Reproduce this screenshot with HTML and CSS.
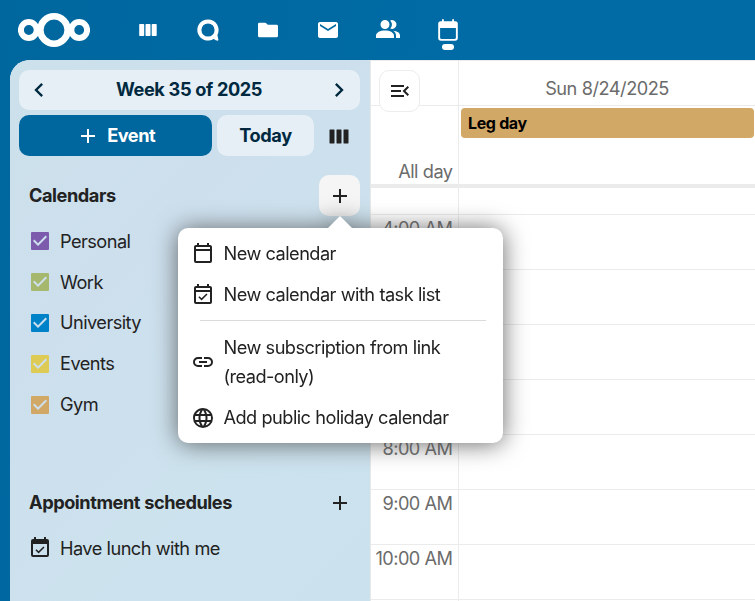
FILE: index.html
```html
<!DOCTYPE html>
<html lang="en">
<head>
<meta charset="utf-8">
<title>Calendar</title>
<link rel="stylesheet" href="styles.css">
</head>
<body>
<svg class="defs" aria-hidden="true">
  <symbol id="plus" viewBox="0 0 24 24"><path d="M19,13H13V19H11V13H5V11H11V5H13V11H19V13Z"/></symbol>
  <symbol id="columns" viewBox="0 0 24 24"><rect x="2.5" y="5.5" width="5" height="14" rx=".4"/><rect x="9.5" y="5.5" width="5" height="14" rx=".4"/><rect x="16.5" y="5.5" width="5" height="14" rx=".4"/></symbol>
  <symbol id="cal-check" viewBox="0 0 24 24"><path d="M19,3H18V1H16V3H8V1H6V3H5C3.9,3 3,3.9 3,5V19A2,2 0 0,0 5,21H19A2,2 0 0,0 21,19V5C21,3.9 20.1,3 19,3M19,19H5V9H19V19M19,7H5V5H19V7M10.56,17.46L16.5,11.53L15.43,10.47L10.56,15.34L8.45,13.23L7.39,14.29L10.56,17.46Z"/></symbol>
  <symbol id="checked" viewBox="0 0 24 24"><path d="M4 3H20A1 1 0 0 1 21 4V20A1 1 0 0 1 20 21H4A1 1 0 0 1 3 20V4A1 1 0 0 1 4 3M10 17L19 8L17.59 6.58L10 14.17L6.41 10.59L5 12L10 17Z"/></symbol>
</svg>

<header class="topbar">
  <svg class="logo" viewBox="0 0 72 36"><circle cx="10.8" cy="18" r="7.9"/><circle class="big" cx="36" cy="18" r="13.7"/><circle cx="61.2" cy="18" r="7.9"/></svg>
  <nav class="apps">
    <span class="app"><svg class="icon" viewBox="0 0 24 24"><rect x="3.2" y="6" width="5" height="12" rx=".7"/><rect x="9.5" y="6" width="5" height="12" rx=".7"/><rect x="15.7" y="6" width="5" height="12" rx=".7"/></svg></span>
    <span class="app"><svg class="icon" viewBox="0 0 24 24"><path fill-rule="evenodd" d="M12 1.4A10.6 10.6 0 1 0 17.7 20.9C19 21.8 21.3 23 22.1 22.6C22.9 22.1 21.8 19.2 21.4 16.9A10.6 10.6 0 0 0 12 1.4M12 5.4A6.6 6.6 0 1 1 12 18.6A6.6 6.6 0 1 1 12 5.4Z"/></svg></span>
    <span class="app"><svg class="icon" viewBox="0 0 24 24"><path d="M3.4 4.7H9Q9.7 4.7 10.2 5.2L11.8 6.8H20.5Q22 6.8 22 8.2V17.8Q22 19.3 20.5 19.3H3.5Q2 19.3 2 17.8V6.1Q2 4.7 3.4 4.7Z"/></svg></span>
    <span class="app"><svg class="icon" viewBox="0 0 24 24"><path d="M20,8L12,13L4,8V6L12,11L20,6M20,4H4C2.89,4 2,4.89 2,6V18A2,2 0 0,0 4,20H20A2,2 0 0,0 22,18V6C22,4.89 21.1,4 20,4Z"/></svg></span>
    <span class="app"><svg class="icon" viewBox="0 0 24 24"><path d="M16.5 11A4.5 4.5 0 0 1 14.2 10.6A6.5 6.5 0 0 0 14.2 2.4A4.5 4.5 0 1 1 16.5 11M9 2A4.5 4.5 0 1 1 9 11A4.5 4.5 0 1 1 9 2M0 20V17.8C0 14.4 4.2 12.5 9 12.5S18 14.4 18 17.8V20ZM20 20V17.6C20 15.6 19 14 17.3 12.8C21 13.2 24 14.7 24 17.6V20Z"/></svg></span>
    <span class="app active"><svg class="icon" viewBox="0 0 24 24"><path fill-rule="evenodd" d="M6 1.2H7.8V3.2H16.2V1.2H18V3.2H19.3Q21.8 3.2 21.8 5.7V20Q21.8 22.7 19.1 22.7H4.9Q2.2 22.7 2.2 20V5.7Q2.2 3.2 4.7 3.2H6ZM4.1 10V19.8Q4.1 20.9 5.2 20.9H18.8Q19.9 20.9 19.9 19.8V10Z"/></svg></span>
  </nav>
</header>

<div class="content">
  <aside class="sidebar">
    <div class="period">
      <svg class="icon" viewBox="0 0 24 24"><path d="M15.41,16.58L10.83,12L15.41,7.41L14,6L8,12L14,18L15.41,16.58Z"/></svg>
      <strong>Week 35 of 2025</strong>
      <svg class="icon" viewBox="0 0 24 24"><path d="M8.59,16.58L13.17,12L8.59,7.41L10,6L16,12L10,18L8.59,16.58Z"/></svg>
    </div>
    <div class="actions">
      <button class="btn primary"><svg class="icon"><use href="#plus"/></svg><span>Event</span></button>
      <button class="btn secondary">Today</button>
      <button class="btn square"><svg class="icon"><use href="#columns"/></svg></button>
    </div>
    <div class="heading"><h2>Calendars</h2><div class="add open"><svg class="icon"><use href="#plus"/></svg>
      <div class="menu">
        <div class="item"><svg class="icon" viewBox="0 0 24 24"><path d="M19,3H18V1H16V3H8V1H6V3H5C3.9,3 3,3.9 3,5V19A2,2 0 0,0 5,21H19A2,2 0 0,0 21,19V5C21,3.9 20.1,3 19,3M19,19H5V9H19V19M19,7H5V5H19V7Z"/></svg><span>New calendar</span></div>
        <div class="item"><svg class="icon"><use href="#cal-check"/></svg><span>New calendar with task list</span></div>
        <div class="separator"></div>
        <div class="item tall"><svg class="icon" viewBox="0 0 24 24"><path d="M3.9,12C3.9,10.29 5.29,8.9 7,8.9H11V7H7A5,5 0 0,0 2,12A5,5 0 0,0 7,17H11V15.1H7C5.29,15.1 3.9,13.71 3.9,12M8,13H16V11H8V13M17,7H13V8.9H17C18.71,8.9 20.1,10.29 20.1,12C20.1,13.71 18.71,15.1 17,15.1H13V17H17A5,5 0 0,0 22,12A5,5 0 0,0 17,7Z"/></svg><span>New subscription from link<br>(read-only)</span></div>
        <div class="item"><svg class="icon" viewBox="0 0 24 24"><path d="M16.36,14C16.44,13.34 16.5,12.68 16.5,12C16.5,11.32 16.44,10.66 16.36,10H19.74C19.9,10.64 20,11.31 20,12C20,12.69 19.9,13.36 19.74,14M14.59,19.56C15.19,18.45 15.65,17.25 15.97,16H18.92C17.96,17.65 16.43,18.93 14.59,19.56M14.34,14H9.66C9.56,13.34 9.5,12.68 9.5,12C9.5,11.32 9.56,10.65 9.66,10H14.34C14.43,10.65 14.5,11.32 14.5,12C14.5,12.68 14.43,13.34 14.34,14M12,19.96C11.17,18.76 10.5,17.43 10.09,16H13.91C13.5,17.43 12.83,18.76 12,19.96M8,8H5.08C6.03,6.34 7.57,5.06 9.4,4.44C8.8,5.55 8.35,6.75 8,8M5.08,16H8C8.35,17.25 8.8,18.45 9.4,19.56C7.57,18.93 6.03,17.65 5.08,16M4.26,14C4.1,13.36 4,12.69 4,12C4,11.31 4.1,10.64 4.26,10H7.64C7.56,10.66 7.5,11.32 7.5,12C7.5,12.68 7.56,13.34 7.64,14M12,4.03C12.83,5.23 13.5,6.57 13.91,8H10.09C10.5,6.57 11.17,5.23 12,4.03M18.92,8H15.97C15.65,6.75 15.19,5.55 14.59,4.44C16.43,5.07 17.96,6.34 18.92,8M12,2C6.47,2 2,6.5 2,12A10,10 0 0,0 12,22A10,10 0 0,0 22,12A10,10 0 0,0 12,2Z"/></svg><span>Add public holiday calendar</span></div>
      </div>
    </div></div>
    <ul class="list calendars">
      <li class="purple"><svg class="icon"><use href="#checked"/></svg><span>Personal</span></li>
      <li class="green"><svg class="icon"><use href="#checked"/></svg><span>Work</span></li>
      <li class="blue"><svg class="icon"><use href="#checked"/></svg><span>University</span></li>
      <li class="yellow"><svg class="icon"><use href="#checked"/></svg><span>Events</span></li>
      <li class="orange"><svg class="icon"><use href="#checked"/></svg><span>Gym</span></li>
    </ul>
    <div class="heading"><h2>Appointment schedules</h2><div class="add"><svg class="icon"><use href="#plus"/></svg></div></div>
    <ul class="list">
      <li><svg class="icon" viewBox="0 0 24 24"><path d="M19,3H18V1H16V3H8V1H6V3H5A2,2 0 0,0 3,5V19A2,2 0 0,0 5,21H19A2,2 0 0,0 21,19V5A2,2 0 0,0 19,3M19,19H5V8H19V19M10.56,17.46L16.5,11.53L15.43,10.47L10.56,15.34L8.45,13.23L7.39,14.29L10.56,17.46Z"/></svg><span>Have lunch with me</span></li>
    </ul>
  </aside>

  <main class="grid">
    <button class="toggle"><svg class="icon" viewBox="0 0 24 24"><path d="M21,15.61L19.59,17L14.58,12L19.59,7L21,8.39L17.44,12L21,15.61M3,6H16V8H3V6M3,13V11H13V13H3M3,18V16H16V18H3Z"/></svg></button>
    <div class="row head"><div class="axis"></div><div class="cell">Sun 8/24/2025</div></div>
    <div class="row allday"><div class="axis">All day</div><div class="cell"><div class="event">Leg day</div></div></div>
    <div class="row rest"><div class="axis"></div><div class="cell"></div></div>
    <div class="row hour"><div class="axis">4:00 AM</div><div class="cell"></div></div>
    <div class="row hour"><div class="axis"></div><div class="cell"></div></div>
    <div class="row hour"><div class="axis"></div><div class="cell"></div></div>
    <div class="row hour"><div class="axis"></div><div class="cell"></div></div>
    <div class="row hour"><div class="axis">8:00 AM</div><div class="cell"></div></div>
    <div class="row hour"><div class="axis">9:00 AM</div><div class="cell"></div></div>
    <div class="row hour"><div class="axis">10:00 AM</div><div class="cell"></div></div>
    <div class="row hour"><div class="axis"></div><div class="cell"></div></div>
  </main>
</div>
</body>
</html>
```
FILE: styles.css
```css
* { box-sizing: border-box; }
html, body { height: 100%; }
body {
  margin: 0;
  display: flex;
  flex-direction: column;
  overflow: hidden;
  background: linear-gradient(100deg, #00679e, #006ba5 60%);
  color: #222;
  font: 380 18.2px/29px Inter, "Liberation Sans", sans-serif;
  letter-spacing: -.55px;
  word-spacing: .3px;
}
.defs { display: none; }
.icon { display: block; flex: none; width: 24px; height: 24px; fill: currentColor; }

.topbar { flex: none; display: flex; align-items: center; height: 60px; padding-left: 18px; color: #fff; }
.logo { width: 72px; height: 36px; fill: none; stroke: #fff; stroke-width: 6; }
.logo .big { stroke-width: 6.6; }
.apps { display: flex; margin-left: 28px; }
.app { position: relative; display: flex; align-items: center; justify-content: center; width: 60px; height: 60px; }
.active::after { content: ""; position: absolute; bottom: 10px; left: 24px; width: 12px; height: 6px; border-radius: 3px; background: #fff; }

.content { flex: 1; min-height: 0; display: flex; margin-left: 10px; overflow: hidden; border-top-left-radius: 20px; background: #fff; }
.sidebar { flex: none; width: 360px; padding: 10px 10px 0 9px; background: linear-gradient(135deg, #cce1eb, #cddfed 35%, #cce2ed 65%, #cbe1ee); }
.period { display: flex; align-items: center; justify-content: space-between; height: 40px; padding: 0 7px 0 6px; border-radius: 10px; background: #e6eff6; color: #00293f; }
.period .icon { width: 28px; height: 28px; }
.period strong { padding-bottom: 1px; }
.period strong, .btn, .heading h2 { letter-spacing: -.45px; }
.actions { display: flex; gap: 5px; margin-top: 5px; }
.btn { display: flex; align-items: center; justify-content: center; height: 41px; padding: 0; border: 0; border-radius: 10px; font: inherit; font-weight: 700; }
.primary { width: 193px; gap: 7.5px; background: #00679e; color: #fff; }
.secondary { width: 97px; background: #e6eff6; color: #00293f; }
.square { flex: 1; padding-right: 1px; background: none; color: #222; }

.heading { display: flex; align-items: center; justify-content: space-between; height: 41px; margin-top: 19px; padding-left: 10px; }
.heading h2 { margin: 0; font-size: inherit; font-weight: 700; }
.add { position: relative; display: flex; align-items: center; justify-content: center; width: 41px; height: 41px; border-radius: 10px; }
.open { background: #f5f5f5; }
.list { margin: 5px 0 0; padding: 0 0 0 9px; list-style: none; }
.list li { display: flex; align-items: center; gap: 8px; height: 40.8px; }
.calendars { height: 242px; }
.purple .icon { color: #7c5bad; }
.green .icon { color: #a6b86d; }
.blue .icon { color: #0082c9; }
.yellow .icon { color: #ddcb55; }
.orange .icon { color: #d2a867; }

.menu {
  position: absolute;
  z-index: 5;
  top: 53px;
  right: -143px;
  width: 325px;
  height: 215px;
  padding: 5px 13px;
  border-radius: 10px;
  background: #fff;
  filter: drop-shadow(0 1px 12px rgba(77, 77, 77, .85));
}
.menu::before { content: ""; position: absolute; left: 150px; top: -12px; border: 12px solid transparent; border-top: 0; border-bottom-color: #fff; }
.item { display: flex; align-items: center; gap: 8.5px; height: 41px; white-space: nowrap; }
.tall { height: 70px; }
.separator { height: 1px; margin: 5px 4px 6px 9px; background: #dbdbdb; }

.grid { position: relative; flex: 1; min-width: 0; color: #6b6b6b; border-left: 1px solid #e8e8e8; background: #fff; }
.toggle { position: absolute; left: 8px; top: 10px; width: 41px; height: 42px; display: flex; align-items: center; justify-content: center; padding: 0; border: 1px solid #ededed; border-radius: 10px; background: #fff; color: #222; }
.row { display: flex; border-top: 1px solid #ebebeb; }
.axis { flex: none; width: 88px; border-right: 1px solid #ebebeb; padding-right: 5.5px; white-space: nowrap; display: flex; justify-content: flex-end; }
.cell { flex: 1; min-width: 0; }
.head { height: 45px; }
.head .cell { padding-top: 13px; text-align: center; letter-spacing: -.5px; }
.allday { height: 79px; }
.allday .axis { padding-top: 51px; }
.allday .cell { padding: 2px 1px 0 2px; }
.event { height: 30px; padding-left: 7px; border-radius: 4px; background: #d2a867; color: #000; font-size: 16px; letter-spacing: -.4px; font-weight: 700; line-height: 30px; }
.rest { height: 30px; border-top: 4px solid #ebebeb; }
.hour { height: 55px; line-height: 27px; }
```
